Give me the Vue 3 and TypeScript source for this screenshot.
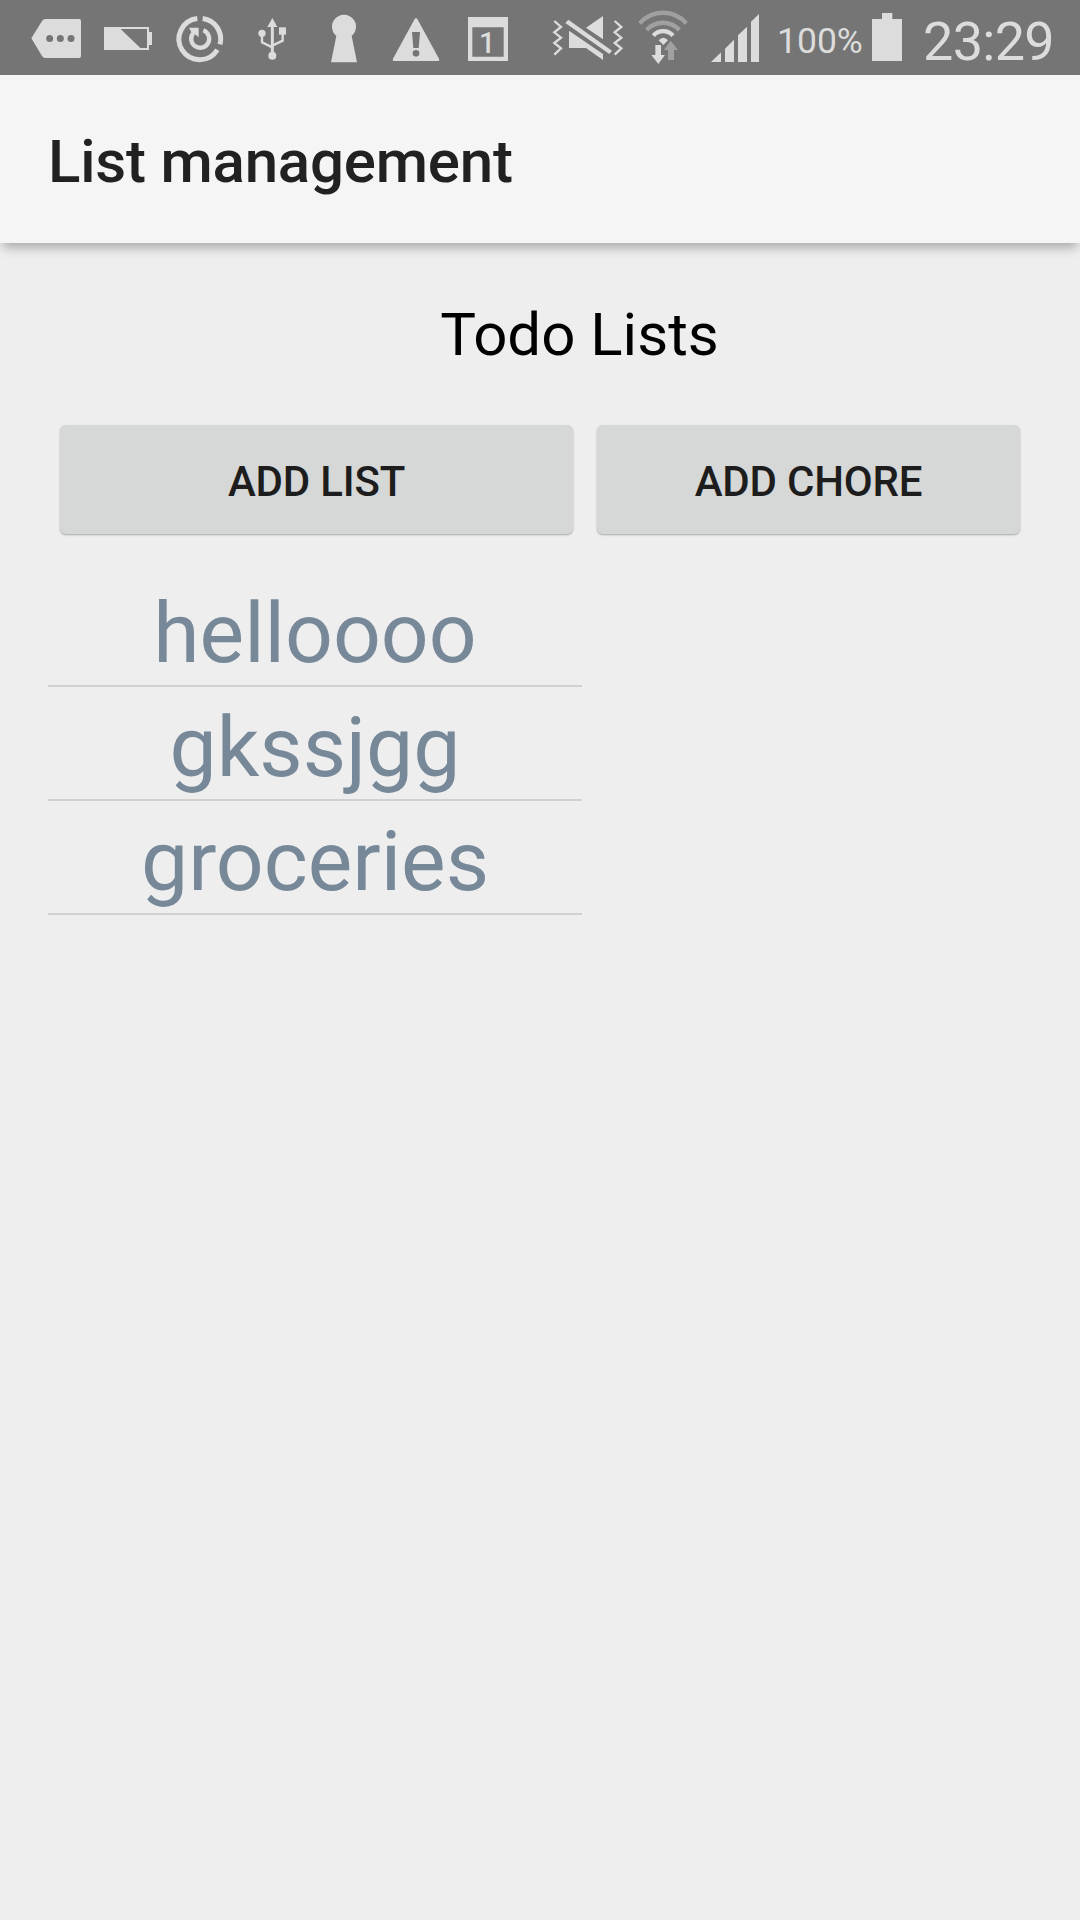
<script setup lang="ts">
interface TodoList {
  id: number
  name: string
}

const lists: TodoList[] = [
  { id: 1, name: 'helloooo' },
  { id: 2, name: 'gkssjgg' },
  { id: 3, name: 'groceries' },
]
</script>

<template>
  <div class="screen">
    <header class="status">
      <svg width="90" height="75" viewBox="0 0 270 225">
        <path d="M94 115 L126 63 Q130 57 136 57 H237 Q243 57 243 63 V168 Q243 174 237 174 H136 Q130 174 126 168 Z" />
        <g class="cut">
          <circle cx="149" cy="115.500" r="10.500" />
          <circle cx="181" cy="115.500" r="10.500" />
          <circle cx="213" cy="115.500" r="10.500" />
        </g>
      </svg>
      <svg width="75" height="75" viewBox="270 0 225 225">
        <path fill-rule="evenodd" d="M312 81 H447 V96 H456 V135 H447 V150 H312 Z M362 87 L421 144 H441 V87 Z" />
      </svg>
      <svg width="75" height="75" viewBox="495 0 225 225">
        <path class="line" stroke-width="15" d="M608 55.500 A62 62 0 0 1 660 133" />
        <path class="line" stroke-width="15" d="M652 149 A62 62 0 1 1 592 55.500" />
        <path class="line" stroke-width="13" d="M610 91 A27 27 0 1 1 579 100" />
        <path d="M567 83 H596 V112 L587 104 L579 103 L574 96 Z" />
      </svg>
      <svg width="65" height="75" viewBox="0 0 195 225">
        <path d="M97 54 L112 81 H82 Z" />
        <path class="line" stroke-width="9" d="M97 78 V160" />
        <path class="line" stroke-width="7" d="M66 105 V127 L97 142 M128 100 V122 L97 137" />
        <circle cx="66" cy="100" r="11" />
        <circle cx="97" cy="167" r="12" />
        <path d="M117 82 H138 V104 H117 Z" />
      </svg>
      <svg width="70" height="75" viewBox="195 0 210 225">
        <path d="M289 108 A36 36 0 1 1 335 108 L351 187 H273 Z" />
      </svg>
      <svg width="75" height="75" viewBox="405 0 225 225">
        <path d="M524 57 Q528 51 532 57 L597 176 Q600 183 592 183 H464 Q456 183 459 176 Z" />
        <g class="cut">
          <path d="M516 96 H540 L536 144 H520 Z" />
          <circle cx="528" cy="160" r="10" />
        </g>
      </svg>
      <svg width="80" height="75" viewBox="630 0 240 225">
        <path fill-rule="evenodd" d="M684 51 H804 V183 H684 Z M697 82 V170 H791 V82 Z" />
        <text x="717" y="159" class="day">1</text>
      </svg>
      <svg width="105" height="75" viewBox="0 0 315 225">
        <path class="line" stroke-width="7" d="M73 63 L93 81 L73 97 L93 113 L73 129 L93 145 L73 164 M254 63 L274 81 L254 97 L274 113 L254 129 L274 145 L254 164" />
        <path d="M168 83 L219 48 V118 Z M117 92 L219 162 V180 L168 144 H117 Z M115 59 L246 152 L238 162 L106 69 Z" />
      </svg>
      <svg width="60" height="75" viewBox="315 0 180 225">
        <g class="line dim" stroke-width="13">
          <path d="M329 70 A93 93 0 0 1 469 70" />
          <path d="M350 90 A66 66 0 0 1 448 90" />
        </g>
        <path class="line" stroke-width="13" d="M370 107 A39 39 0 0 1 429 107" />
        <path d="M400 135 L386 121 Q400 106 414 121 Z M376 135 H393 V165 H405 L385 192 L364 165 H376 Z" />
        <path class="faint" d="M422 122 L444 150 H432 V180 H414 V150 H402 Z" />
      </svg>
      <svg width="75" height="75" viewBox="495 0 225 225">
        <path d="M543 186 L573 157 V186 Z M585 186 V146 L612 119 V186 Z M624 186 V106 L651 80 V186 Z M663 186 V65 L687 42 V186 Z" />
      </svg>
      <span class="percent">100%</span>
      <svg width="34" height="75" viewBox="330 0 102 225">
        <path d="M336 57 H366 V39 H397 V57 H426 V183 H336 Z" />
      </svg>
      <span class="clock">23:29</span>
    </header>

    <div class="toolbar">
      <h1>List management</h1>
    </div>

    <main>
      <h2>Todo Lists</h2>
      <div class="actions">
        <button type="button" class="add-list">ADD LIST</button>
        <button type="button" class="add-chore">ADD CHORE</button>
      </div>
      <ul>
        <li v-for="list in lists" :key="list.id">{{ list.name }}</li>
      </ul>
    </main>
  </div>
</template>

<style>
body {
  margin: 0;
  background: #eeeeee;
}
</style>

<style scoped>
.screen {
  width: 1080px;
  height: 1920px;
  overflow: hidden;
  background: #eeeeee;
  font-family: Roboto, "Liberation Sans", sans-serif;
}

.status {
  display: flex;
  height: 75px;
  background: #757575;
  color: #dcdcdc;
  white-space: nowrap;
}

.status svg {
  flex: none;
  display: block;
  fill: #dcdcdc;
}

.status svg .cut {
  fill: #757575;
}

.status svg .line {
  fill: none;
  stroke: #dcdcdc;
}

.status svg .dim {
  stroke: #a0a0a0;
}

.status svg .faint {
  fill: #a0a0a0;
}

.day {
  font-size: 86px;
  font-weight: 500;
}

.percent {
  box-sizing: border-box;
  width: 100px;
  padding-left: 7px;
  font-size: 35.500px;
  line-height: 83px;
}

.clock {
  margin-left: 19px;
  font-size: 54px;
  line-height: 83px;
  letter-spacing: -0.700px;
}

.toolbar {
  position: relative;
  display: flex;
  align-items: center;
  height: 168px;
  padding: 0 48px;
  background: #f5f5f5;
  box-shadow: 0 8px 10px -3px rgba(0, 0, 0, 0.28);
  clip-path: inset(0 0 -30px 0);
}

h1 {
  margin: 5px 0 0;
  color: #212121;
  font-size: 60px;
  font-weight: 500;
  line-height: 70px;
  letter-spacing: -0.200px;
}

main {
  padding: 49px 48px 0;
}

h2 {
  margin: 0 0 0 79px;
  color: #000;
  font-size: 60px;
  font-weight: 400;
  line-height: 86px;
  text-align: center;
}

.actions {
  display: flex;
  gap: 24px;
  margin-top: 47px;
  padding: 0 12px;
}

button {
  height: 109px;
  padding: 4px 0 0;
  border: 0;
  border-radius: 6px;
  background: #d6d7d7;
  box-shadow: 0 1px 2px rgba(0, 0, 0, 0.3);
  color: #1d1d1d;
  font-family: inherit;
  font-size: 42px;
  font-weight: 500;
  letter-spacing: -0.200px;
}

.add-list {
  width: 513px;
}

.add-chore {
  flex: 1;
}

ul {
  width: 534px;
  margin: 39px 0 0;
  padding: 0;
  list-style: none;
}

li {
  height: 112px;
  border-bottom: 2px solid #d0d0d0;
  color: #778899;
  font-size: 84px;
  line-height: 122px;
  text-align: center;
}
</style>
